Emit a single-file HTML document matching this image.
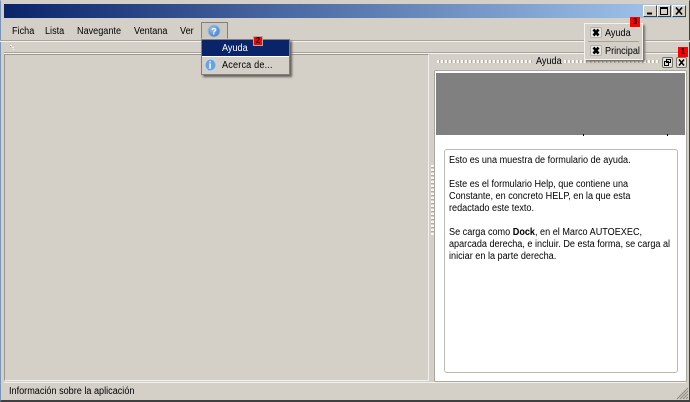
<!DOCTYPE html>
<html><head><meta charset="utf-8"><style>
html,body{margin:0;padding:0;background:#d4d0c8}
#w{position:relative;width:690px;height:402px;overflow:hidden;background:#d4d0c8;font:10px/12px "Liberation Sans",sans-serif;color:#000}
#w div,#w svg{position:absolute}
.t{white-space:nowrap;transform:scaleX(.91);transform-origin:0 0}
.b{width:10px;height:10px;box-sizing:border-box;background:#f00;border:1px solid #a55;font:bold 8px/8px "Liberation Sans",sans-serif;text-align:center;color:#000}
.wb{width:14px;height:12px;background:#d4d0c8;border:1px solid;border-color:#fff #404040 #404040 #fff;box-sizing:border-box;top:5px}
.g{height:3px;top:60px;background:repeating-linear-gradient(90deg,#f8f7f4 0 2px,#b0aca4 2px 3px,#d4d0c8 3px 4px)}
.ic{width:12px;height:11px;box-sizing:border-box;background:#e8e6e0;border:1px solid #b5b2ab;border-radius:2px}
</style></head><body><div id="w">
<div style="left:0;top:0;width:690px;height:402px;box-sizing:border-box;border-style:solid;border-width:1px 1px 2px 1px;border-color:#d4d0c8 #404040 #404040 #7a93b8"></div>
<div style="left:4px;top:4px;width:682px;height:14px;background:linear-gradient(90deg,#0a246a,#a6caf0)"></div>
<div class="wb" style="left:643px"><svg width="12" height="10"><path d="M3 7.500h5" stroke="#000" stroke-width="2"/></svg></div>
<div class="wb" style="left:657px"><svg width="12" height="10"><path d="M2.500 1.500h7v7h-7zM2.500 2.500h7" stroke="#000" fill="none"/></svg></div>
<div class="wb" style="left:672px"><svg width="12" height="10"><path d="M3 1.500l6 7M9 1.500l-6 7" stroke="#000" stroke-width="1.600"/></svg></div>

<div class="t" style="left:12px;top:26px">Ficha</div>
<div class="t" style="left:45px;top:26px">Lista</div>
<div class="t" style="left:77px;top:26px">Navegante</div>
<div class="t" style="left:134px;top:26px">Ventana</div>
<div class="t" style="left:180px;top:26px">Ver</div>
<div style="left:201px;top:22px;width:27px;height:17px;box-sizing:border-box;border:1px solid;border-color:#808080 #808080 #d4d0c8 #808080;background:#cdc9c1"></div>
<svg style="left:207px;top:24px" width="14" height="14"><defs><radialGradient id="q" cx=".4" cy=".35" r=".7"><stop offset="0" stop-color="#9cc8f2"/><stop offset="1" stop-color="#3a78c8"/></radialGradient></defs><circle cx="7" cy="7" r="6" fill="url(#q)" stroke="#aebccf"/><text x="7" y="10.500" font-size="9" font-weight="bold" fill="#fff" text-anchor="middle" font-family="Liberation Sans">?</text></svg>

<div style="left:0;top:40px;width:690px;height:1px;background:#a8a49c"></div>
<div style="left:0;top:41px;width:690px;height:1px;background:#f4f2ee"></div>
<div style="left:4px;top:52px;width:682px;height:1px;background:#a8a49c"></div>
<div style="left:4px;top:53px;width:682px;height:1px;background:#f4f2ee"></div>
<svg style="left:9px;top:45px" width="6" height="6"><path d="M1 .5h2M3 2.500h2M4 4.500h1" stroke="#f4f4f4"/><path d="M1 1.500h1" stroke="#999"/></svg>

<div style="left:4px;top:54px;width:425px;height:327px;box-sizing:border-box;border:1px solid;border-color:#9c988f #f2f0ec #f2f0ec #9c988f"></div>

<div style="left:431px;top:165px;width:3px;height:70px;background:repeating-linear-gradient(180deg,#f8f7f4 0 2px,#b0aca4 2px 3px,#d4d0c8 3px 4px)"></div>

<div class="g" style="left:437px;width:95px"></div>
<div class="t" style="left:536px;top:56px">Ayuda</div>
<div class="g" style="left:564px;width:96px"></div>

<div style="left:662px;top:57px;width:11px;height:11px;box-sizing:border-box;border:1px solid #77736b;border-radius:2px;background:#e4e1da"></div>
<svg style="left:662px;top:57px" width="11" height="11"><path d="M4.500 2.500h4v3h-4zM2.500 4.500h4v4h-4z" stroke="#000" fill="#e4e1da"/></svg>
<div style="left:676px;top:57px;width:11px;height:11px;box-sizing:border-box;border:1px solid #77736b;border-radius:2px;background:#e4e1da"></div>
<svg style="left:676px;top:57px" width="11" height="11"><path d="M3 2.500l5 6M8 2.500l-5 6" stroke="#000" stroke-width="1.500"/></svg>
<div class="b" style="left:678px;top:47px;border-color:#f00">1</div>

<div style="left:434px;top:70px;width:253px;height:312px;box-sizing:border-box;background:#fff;border:1px solid #aaa7a0;border-radius:2px"></div>
<div style="left:436px;top:73px;width:249px;height:62px;background:#808080"></div>
<div style="left:583px;top:134px;width:1px;height:2px;background:#000"></div>
<div style="left:667px;top:134px;width:1px;height:2px;background:#000"></div>
<div style="left:444px;top:149px;width:234px;height:224px;box-sizing:border-box;background:#fff;border:1px solid #bdbab3;border-radius:3px"></div>
<div class="t" style="left:449px;top:155px">Esto es una muestra de formulario de ayuda.</div>
<div class="t" style="left:449px;top:179px">Este es el formulario Help, que contiene una</div>
<div class="t" style="left:449px;top:191px">Constante, en concreto HELP, en la que esta</div>
<div class="t" style="left:449px;top:203px">redactado este texto.</div>
<div class="t" style="left:449px;top:227px">Se carga como <b>Dock</b>, en el Marco AUTOEXEC,</div>
<div class="t" style="left:449px;top:239px">aparcada derecha, e incluir. De esta forma, se carga al</div>
<div class="t" style="left:449px;top:251px">iniciar en la parte derecha.</div>

<div style="left:584px;top:23px;width:59px;height:37px;box-sizing:border-box;background:#d4d0c8;border:1px solid #f4f2ee;box-shadow:2px 2px 2px #77736b"></div>
<div class="ic" style="left:590px;top:27px"></div>
<svg style="left:590px;top:27px" width="12" height="11"><path d="M3.500 2.500l5 6M8.500 2.500l-5 6" stroke="#000" stroke-width="2.600"/></svg>
<div class="t" style="left:605px;top:28px">Ayuda</div>
<div style="left:588px;top:41px;width:51px;height:1px;background:#a8a49c"></div>
<div class="ic" style="left:590px;top:45px"></div>
<svg style="left:590px;top:45px" width="12" height="11"><path d="M3.500 2.500l5 6M8.500 2.500l-5 6" stroke="#000" stroke-width="2.600"/></svg>
<div class="t" style="left:605px;top:46px">Principal</div>
<div class="b" style="left:630px;top:17px;border-color:#f00">3</div>

<div style="left:201px;top:39px;width:89px;height:36px;box-sizing:border-box;background:#d4d0c8;border:1px solid #808080;box-shadow:2px 2px 2px #66625a"></div>
<div style="left:202px;top:40px;width:87px;height:16px;background:#0a246a"></div>
<div class="t" style="left:222px;top:43px;color:#fff">Ayuda</div>
<div style="left:202px;top:56px;width:87px;height:1px;background:#fff"></div>
<div class="b" style="left:253px;top:36px;border-color:#aaa">2</div>
<svg style="left:203px;top:58px" width="15" height="15"><path d="M7 1a6 6 0 1 1-1.500 11.800L4 14l.3-2.400A6 6 0 0 1 7 1z" fill="#6aa2e0" stroke="#c8d8ec"/><text x="7" y="10.500" font-size="10" font-weight="bold" fill="#fff" text-anchor="middle" font-family="Liberation Serif">i</text></svg>
<div class="t" style="left:222px;top:60px;letter-spacing:.2px">Acerca de...</div>

<div style="left:4px;top:382px;width:682px;height:1px;background:#f4f2ee"></div>
<div class="t" style="left:9px;top:386px">Información sobre la aplicación</div>
<svg style="left:676px;top:387px" width="13" height="13"><path d="M12 1L1 12M12 4L4 12M12 7L7 12M12 10L10 12" stroke="#8a867e" stroke-width="1"/></svg>
</div></body></html>
